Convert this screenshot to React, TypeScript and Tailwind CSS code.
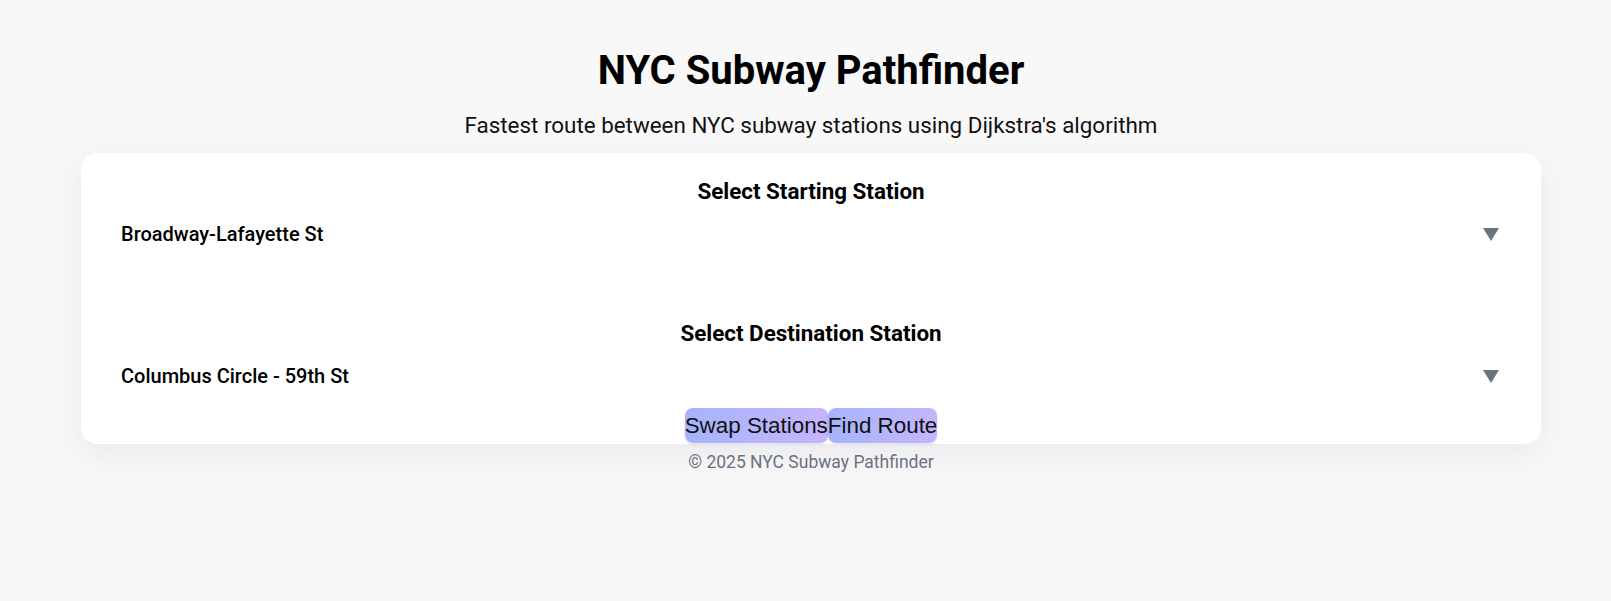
import { useState } from "react";

const stations = ["Broadway-Lafayette St", "Columbus Circle - 59th St"];

function Caret() {
  return (
    <svg width="16" height="13" viewBox="0 0 16 13" className="shrink-0">
      <polygon points="0,0 16,0 8,13" fill="#6b7280" />
    </svg>
  );
}

interface StationSelectProps {
  label: string;
  value: string;
}

function StationSelect({ label, value }: StationSelectProps) {
  return (
    <div className="flex flex-col">
      <h2 className="text-center text-[22.4px] leading-[28px] font-bold text-black">
        {label}
      </h2>
      <div className="mt-[9px] h-[40px] pl-[40px] pr-[42px] flex items-center justify-between">
        <span className="text-[20px] font-medium text-black">{value}</span>
        <Caret />
      </div>
    </div>
  );
}

export default function App() {
  const [from, setFrom] = useState(stations[0]);
  const [to, setTo] = useState(stations[1]);

  const swap = () => {
    setFrom(to);
    setTo(from);
  };

  return (
    <div className="min-h-screen bg-[#f8f8f9] font-['Roboto',sans-serif] text-black pl-[81px] pr-[70px]">
      <header className="pt-[47px] flex flex-col items-center">
        <h1 className="text-[40px] leading-[48px] font-bold">NYC Subway Pathfinder</h1>
        <p className="mt-[16px] text-[22.4px] leading-[28px] text-[#111]">
          Fastest route between NYC subway stations using Dijkstra's algorithm
        </p>
      </header>

      <main className="mt-[14px] bg-white rounded-2xl shadow-[0_10px_32px_rgba(60,60,110,0.08)] pt-[24px] pb-[1px]">
        <StationSelect label="Select Starting Station" value={from} />
        <div className="mt-[65px]">
          <StationSelect label="Select Destination Station" value={to} />
        </div>
        <div className="mt-[12px] flex justify-center">
          <button
            onClick={swap}
            className="rounded-lg bg-linear-to-r from-[#a5b4fc] to-[#c4b5fd] py-[5px] font-['Liberation_Sans',Arial,sans-serif] text-[22.4px] leading-[25px] text-[#111] shadow-sm"
          >
            Swap Stations
          </button>
          <button className="rounded-lg bg-linear-to-r from-[#a5b4fc] to-[#c4b5fd] py-[5px] font-['Liberation_Sans',Arial,sans-serif] text-[22.4px] leading-[25px] text-[#111] shadow-sm">
            Find Route
          </button>
        </div>
      </main>

      <footer className="mt-[6px] text-center text-[17.5px] leading-[24px] text-[#6b7280]">
        © 2025 NYC Subway Pathfinder
      </footer>
    </div>
  );
}
